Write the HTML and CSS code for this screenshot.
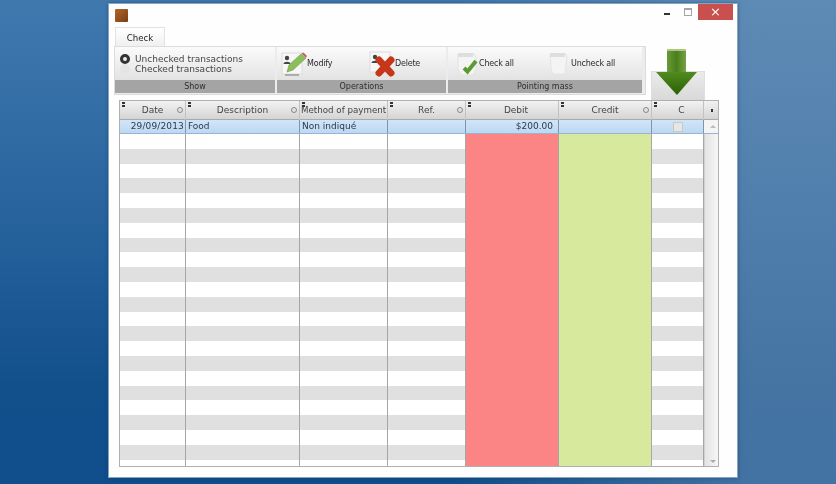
FILE: index.html
```html
<!DOCTYPE html>
<html lang="en">
<head>
<meta charset="utf-8">
<title>Check</title>
<link rel="stylesheet" href="styles.css">
</head>
<body>
<div class="window">
  <div class="titlebar">
    <span class="app-icon"></span>
    <div class="controls">
      <span class="min"></span>
      <span class="max"></span>
      <span class="close">×</span>
    </div>
  </div>
  <div class="tabs"><span class="tab">Check</span></div>
  <div class="ribbon-row">
    <div class="ribbon">
      <section class="group g-show">
        <div class="group-body radios">
          <label class="radio"><span class="dot on"></span>Unchecked transactions</label>
          <label class="radio"><span class="dot"></span>Checked transactions</label>
        </div>
        <div class="group-name">Show</div>
      </section>
      <section class="group g-ops">
        <div class="group-body buttons">
          <span class="rb rb-modify">
            <svg class="ico" width="26" height="26" viewBox="0 0 26 26">
              <rect x="1" y="2" width="20" height="21" fill="#f7f7f7" stroke="#dcdcdc"/>
              <circle cx="6" cy="7" r="2.2" fill="#444"/>
              <path d="M2.500 13c0-3 7-3 7 0z" fill="#444"/>
              <path d="M6 21l2-7L20 3l5 4L12 19z" fill="#8cbf5a" stroke="#6d9a45" stroke-width=".6"/>
              <path d="M20.500 2.500l4.500 4 1-1.500-3.500-3.500z" fill="#d9506a"/>
              <path d="M4 24h14" stroke="#9a9a9a" stroke-width="1.500"/>
            </svg>
            Modify
          </span>
          <span class="rb rb-delete">
            <svg class="ico" width="26" height="26" viewBox="0 0 26 26">
              <rect x="1" y="1" width="20" height="20" fill="#f7f7f7" stroke="#dcdcdc"/>
              <circle cx="6" cy="6" r="2.200" fill="#444"/>
              <path d="M2.500 12c0-3 7-3 7 0z" fill="#444"/>
              <path d="M10 9l12 13M22 9L10 22" stroke="#c8361a" stroke-width="7" stroke-linecap="round"/>
            </svg>
            Delete
          </span>
        </div>
        <div class="group-name">Operations</div>
      </section>
      <section class="group g-mass">
        <div class="group-body buttons">
          <span class="rb rb-check">
            <svg class="ico" width="24" height="26" viewBox="0 0 24 26">
              <path d="M2 3h16l2 3v12l-3 6H5l-3-6z" fill="#f4f4f4" stroke="#e2e2e2"/>
              <rect x="2" y="2" width="15" height="4" fill="#dedede"/>
              <path d="M8 17l3.500 3.500L20 10" fill="none" stroke="#5e9a32" stroke-width="4"/>
            </svg>
            Check all
          </span>
          <span class="rb rb-uncheck">
            <svg class="ico" width="24" height="26" viewBox="0 0 24 26">
              <path d="M3 3h16l1 3-2 17H6L4 18z" fill="#f4f4f4" stroke="#e4e4e4"/>
              <rect x="3" y="2" width="15" height="4" fill="#dedede"/>
            </svg>
            Uncheck all
          </span>
        </div>
        <div class="group-name">Pointing mass</div>
      </section>
    </div>
    <div class="export">
      <svg class="arrow" width="42" height="47" viewBox="0 0 42 47">
        <defs>
          <linearGradient id="shaft" x1="0" x2="1" y1="0" y2="0">
            <stop offset="0" stop-color="#6a9a38"/>
            <stop offset=".5" stop-color="#4a7f1c"/>
            <stop offset="1" stop-color="#74a244"/>
          </linearGradient>
          <linearGradient id="head" x1="0" x2="0" y1="0" y2="1">
            <stop offset="0" stop-color="#508c1e"/>
            <stop offset="1" stop-color="#2c5f06"/>
          </linearGradient>
        </defs>
        <rect x="11" y="0" width="19" height="24" fill="url(#shaft)"/>
        <rect x="11" y="0" width="19" height="2" fill="#a9c982"/>
        <path d="M0 23h41L21 46z" fill="url(#head)"/>
      </svg>
    </div>
  </div>
  <div class="grid">
    <div class="cols head">
      <div class="hc"><i class="sort"></i>Date<i class="find"></i></div>
      <div class="hc"><i class="sort"></i>Description<i class="find"></i></div>
      <div class="hc hc-tight"><i class="sort"></i>Method of payment</div>
      <div class="hc"><i class="sort"></i>Ref.<i class="find"></i></div>
      <div class="hc hc-shift"><i class="sort"></i>Debit</div>
      <div class="hc"><i class="sort"></i>Credit<i class="find"></i></div>
      <div class="hc hc-shift"><i class="sort"></i>C</div>
      <div class="hc hc-end"><i class="mark"></i></div>
    </div>
    <div class="cols selected">
      <div class="c c-date">29/09/2013</div>
      <div class="c">Food</div>
      <div class="c">Non indiqué</div>
      <div class="c"></div>
      <div class="c c-num">$200.00</div>
      <div class="c"></div>
      <div class="c c-box"><span class="box"></span></div>
      <div class="sel-end"></div>
    </div>
    <div class="cols rows">
      <div class="col"></div>
      <div class="col"></div>
      <div class="col"></div>
      <div class="col"></div>
      <div class="col debit"></div>
      <div class="col credit"></div>
      <div class="col"></div>
      <div class="scroll"><i class="up"></i><i class="down"></i></div>
    </div>
  </div>
</div>
</body>
</html>
```
FILE: styles.css
```css
* { box-sizing: border-box; }
html, body { margin: 0; height: 100%; }
body {
  width: 836px;
  height: 484px;
  overflow: hidden;
  padding: 3px 0 0 108px;
  font-family: "DejaVu Sans", sans-serif;
  color: #333;
  background:
    linear-gradient(90deg, transparent 55%, rgba(130,160,190,.45) 90%),
    linear-gradient(180deg, #4079ae 0%, #2a659f 40%, #12508c 80%, #0f4e8b 100%);
}
.window {
  width: 630px;
  height: 475px;
  background: #fefefe;
  border: 1px solid #8aa4bd;
  box-shadow: 0 0 3px rgba(20,50,90,.5);
  padding: 0 5px;
  filter: blur(.4px);
}

.titlebar {
  height: 23px;
  display: flex;
  align-items: flex-start;
  justify-content: space-between;
}
.app-icon {
  width: 13px;
  height: 13px;
  margin: 5px 0 0 1px;
  background: linear-gradient(135deg, #b0672c, #7a3e12);
  border-radius: 1px;
}
.controls { display: flex; align-items: flex-start; margin-right: -1px; }
.min { width: 6px; height: 2px; background: #333; margin: 9px 14px 0 0; }
.max { width: 8px; height: 8px; border: 1px solid #a5a5a5; border-top-width: 2px; margin: 4px 6px 0 0; }
.close {
  width: 35px; height: 16px; background: #c9504f; color: #fff;
  font-size: 13px; line-height: 15px; text-align: center;
}

.tabs { height: 19px; display: flex; }
.tab {
  width: 50px;
  margin-left: 1px;
  background: linear-gradient(#fff, #f0f0f0);
  border: 1px solid #e2e2e2;
  border-bottom: 0;
  font-size: 8.600px;
  text-align: center;
  line-height: 21px;
  color: #222;
}

.ribbon-row { display: flex; height: 54px; }
.ribbon {
  width: 532px;
  height: 49px;
  background: #ececec;
  border: 1px solid #dcdcdc;
  display: flex;
  gap: 2px;
}
.group { display: flex; flex-direction: column; background: linear-gradient(#fbfbfb, #d9d9d9); height: 46px; }
.g-show { width: 160px; }
.g-ops { width: 169px; }
.g-mass { width: 194px; }
.group-body { height: 33px; }
.group-name {
  height: 13px;
  background: #a4a4a4;
  font-size: 8px;
  line-height: 13px;
  text-align: center;
  color: #2e2e2e;
}
.radios { padding: 7px 0 0 5px; }
.radio {
  display: flex;
  align-items: center;
  height: 10px;
  font-size: 9px;
  color: #444;
  white-space: nowrap;
}
.dot {
  width: 10px; height: 10px; border-radius: 50%;
  background: #e4e4e4; margin-right: 5px; flex: none;
}
.dot.on { background: #eee; border: 3px solid #333; }
.buttons { display: flex; }
.rb {
  display: flex;
  align-items: center;
  font-size: 8px;
  letter-spacing: -.2px;
  color: #2a2a2a;
  white-space: nowrap;
  height: 33px;
}
.ico { flex: none; }
.rb-modify { margin-left: 4px; width: 88px; }
.rb-check { margin-left: 8px; width: 91px; }
.rb-check .ico { margin-right: -1px; }
.rb-uncheck .ico { margin-right: 0; }

.export { flex: 1; margin-left: 5px; position: relative; height: 54px; }
.export::before {
  content: "";
  position: absolute;
  left: 0; top: 25px;
  width: 52px; height: 29px;
  background: linear-gradient(#ebebeb, #d8d8d8);
  border: 1px solid #dedede;
}
.arrow { position: absolute; left: 5px; top: 3px; }

.grid {
  width: 600px;
  height: 367px;
  margin-left: 5px;
  border: 1px solid #b0b0b0;
  display: flex;
  flex-direction: column;
  position: relative;
}
.cols {
  display: grid;
  grid-template-columns: 66px 114px 88px 78px 93px 93px 52px 1fr;
}
.head { height: 19px; background: linear-gradient(#f2f2f2, #d4d4d4); border-bottom: 1px solid #aaa; }
.hc {
  position: relative;
  border-right: 1px solid #c2c2c2;
  font-size: 9px;
  line-height: 19px;
  text-align: center;
  color: #444;
  white-space: nowrap;
}
.hc-tight { font-size: 8.700px; text-align: left; padding-left: 1px; }
.hc-shift { padding-left: 8px; }
.sort {
  position: absolute; left: 2px; top: 1px; width: 3px; height: 5px;
  background: linear-gradient(#333 0 40%, transparent 40% 60%, #333 60%);
}
.find {
  position: absolute; right: 2px; top: 6px; width: 6px; height: 6px;
  border: 1px solid #888; border-radius: 50%;
}
.hc-end { border-right: 0; }
.mark { position: absolute; left: 7px; top: 8px; width: 2px; height: 3px; background: #333; }

.selected {
  height: 14px;
  background: linear-gradient(#d2e5f8, #bcd8f4);
  border-bottom: 1px solid #9ab4d0;
}
.c {
  border-right: 1px solid #7f95ad;
  font-size: 9px;
  line-height: 13px;
  padding: 0 2px;
  white-space: nowrap;
  color: #2c3a48;
}
.c-date { text-align: right; padding-right: 1px; letter-spacing: .15px; }
.c-num { text-align: right; padding-right: 5px; }
.c-box { display: flex; justify-content: center; padding: 2px 0 0 0; }
.box { width: 10px; height: 10px; background: #e6e6e6; border: 1px solid #c8c8c8; }
.sel-end { background: #f4f4f4; }

.rows {
  flex: 1;
  background: repeating-linear-gradient(#fff 0 14.800px, #e0e0e0 14.800px 29.600px);
}
.col { border-right: 1px solid #a6a6a6; }
.debit { background: #fb8585; }
.credit { background: #d6e99c; }
.scroll {
  position: relative;
  background: linear-gradient(90deg, #e4e4e4, #f6f6f6);
  border-left: 1px solid #d2d2d2;
}
.up, .down { position: absolute; left: 5px; width: 0; height: 0; border: 3px solid transparent; }
.up { top: -12px; border-bottom-color: #bbb; }
.down { bottom: 0; border-top-color: #aaa; }
```
